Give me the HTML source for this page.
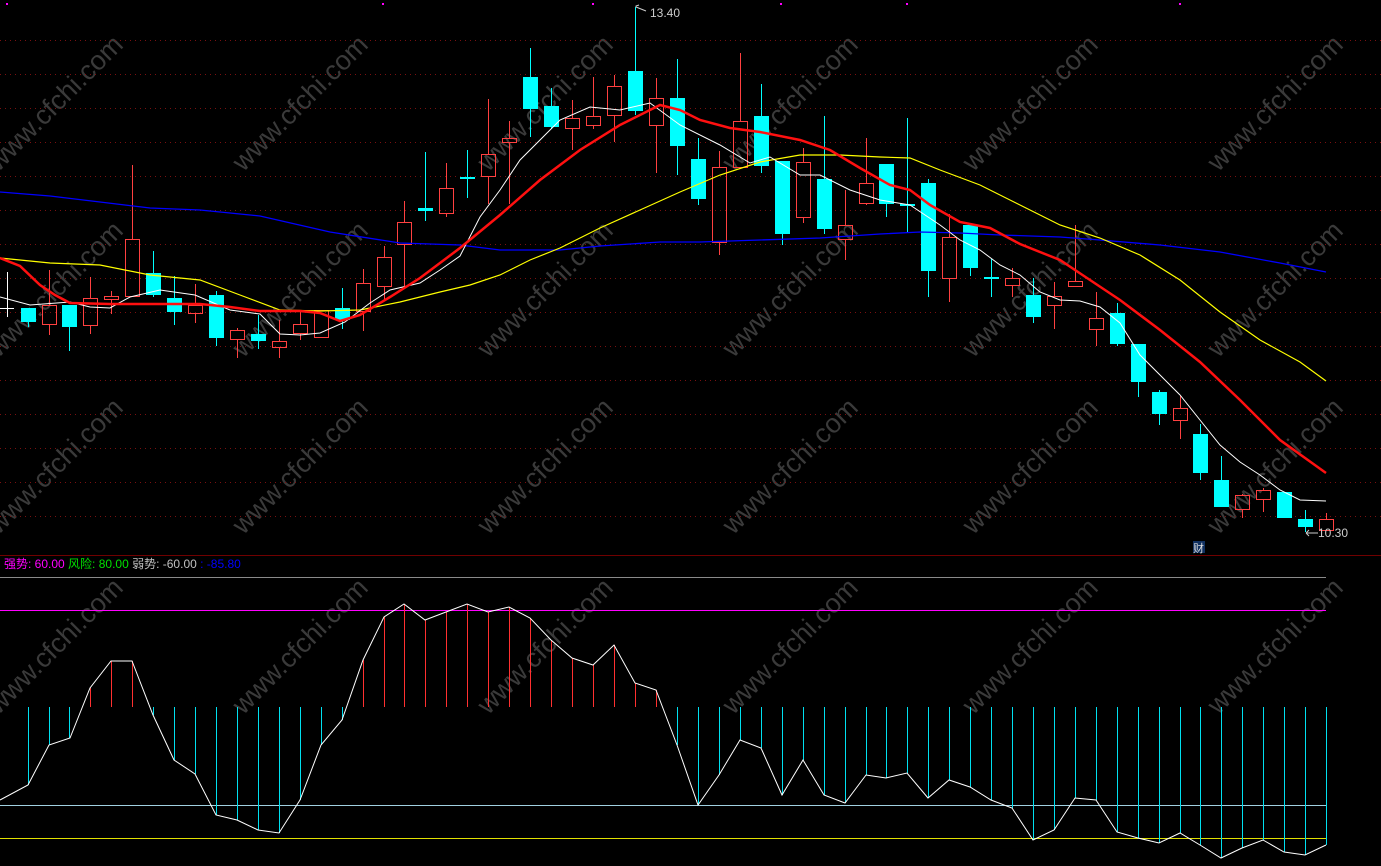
<!DOCTYPE html>
<html><head><meta charset="utf-8"><style>
html,body{margin:0;padding:0;background:#000;overflow:hidden}
svg{display:block}
text{font-family:"Liberation Sans","Noto Sans CJK SC",sans-serif}
</style></head><body>
<svg id="s" width="1381" height="866" viewBox="0 0 1381 866" xmlns="http://www.w3.org/2000/svg">
<rect width="1381" height="866" fill="#000"/>
<g id="wm" fill="#3a3a3a" font-size="27"></g>
<g id="grid" stroke="#7a1010" stroke-width="1" stroke-dasharray="1,4"></g>
<g id="candles"></g>
<g id="ma" fill="none"></g>
<line x1="0" y1="555.5" x2="1381" y2="555.5" stroke="#700000"/>
<line x1="0" y1="577.5" x2="1326" y2="577.5" stroke="#8a8a8a"/>
<line x1="0" y1="610.5" x2="1326" y2="610.5" stroke="#ff00ff"/>
<line x1="0" y1="805.5" x2="1326" y2="805.5" stroke="#a0d0e0"/>
<line x1="0" y1="838.5" x2="1326" y2="838.5" stroke="#e0e000"/>
<g id="ind"></g>
<text x="4" y="568" font-size="12"><tspan fill="#ff00ff">强势: 60.00</tspan> <tspan fill="#00e000">风险: 80.00</tspan> <tspan fill="#c0c0c0">弱势: -60.00</tspan> <tspan fill="#0000ff">: -85.80</tspan></text>
<path d="M636 7 v-1 l3 -1 M636 7 l10 4" stroke="#ccc" fill="none"/>
<text x="650" y="17" font-size="12" fill="#ccc">13.40</text>
<path d="M1306 533 l3 -3 M1306 533 l3 3 M1306 533 h12" stroke="#ccc" fill="none"/>
<text x="1318" y="537" font-size="12" fill="#ccc">10.30</text>
<rect x="1193" y="541" width="12" height="12" fill="#103060"/>
<text x="1193" y="552" font-size="11" fill="#ddd">财</text>
</svg>
<script>
var NS="http://www.w3.org/2000/svg";
function el(p,t,a){var e=document.createElementNS(NS,t);for(var k in a)e.setAttribute(k,a[k]);p.appendChild(e);return e;}
var g=document.getElementById('grid');
for(var y=40.5;y<520;y+=34)el(g,'line',{x1:0,y1:y,x2:1381,y2:y});
var wm=document.getElementById('wm');
[55,300,545,790,1030,1275].forEach(function(cx){[112,298,475,655].forEach(function(cy){
 var t=el(wm,'text',{x:cx,y:cy,'text-anchor':'middle','transform':'rotate(-45 '+cx+' '+(cy-9)+')'});t.textContent='www.cfchi.com';});});
[7,383,593,781,907,1180].forEach(function(x){el(document.getElementById('s'),'rect',{x:x-1,y:3,width:2,height:2,fill:'#ff00ff'});});
// x, open,close,high,low, type: r=red hollow, c=cyan, w=white doji
var C=[
[7,308,308,272,317,'w'],[28,308,322,308,327,'c'],[49,305,324,270,335,'r'],[69,305,327,305,351,'c'],
[90,298,325,277,334,'r'],[111,296,299,291,314,'r'],[132,239,296,165,296,'r'],[153,273,295,251,297,'c'],
[174,298,312,276,325,'c'],[195,305,313,284,323,'r'],[216,295,338,291,346,'c'],[237,330,339,328,358,'r'],
[258,334,341,315,349,'c'],[279,341,347,320,358,'r'],[300,324,333,310,340,'r'],[321,310,337,310,337,'r'],
[342,308,320,288,329,'c'],[363,283,311,269,331,'r'],[384,257,286,246,300,'r'],[404,222,244,201,288,'r'],
[425,208,211,152,221,'c'],[446,188,213,163,217,'r'],[467,177,179,150,198,'c'],[488,154,176,99,204,'r'],
[509,138,142,121,204,'r'],[530,77,109,48,137,'c'],[551,106,127,88,129,'c'],[572,118,128,100,150,'r'],
[593,116,125,77,129,'r'],[614,86,115,75,142,'r'],[635,71,111,7,115,'c'],[656,98,125,78,173,'r'],
[677,98,146,59,175,'c'],[698,159,199,138,205,'c'],[719,167,242,151,255,'r'],[740,121,167,53,167,'r'],
[761,116,166,84,173,'c'],[782,161,234,161,245,'c'],[803,162,217,148,223,'r'],[824,179,229,116,234,'c'],
[845,225,239,190,260,'r'],[866,183,203,138,205,'r'],[886,164,204,164,217,'c'],[907,204,206,118,232,'c'],
[928,183,271,179,297,'c'],[949,237,278,214,302,'r'],[970,225,268,225,276,'c'],[991,277,279,259,297,'c'],
[1012,278,285,268,297,'r'],[1033,295,317,278,323,'c'],[1054,296,305,282,329,'r'],[1075,281,286,225,286,'r'],
[1096,318,329,292,346,'r'],[1117,313,344,303,346,'c'],[1138,344,382,344,397,'c'],[1159,392,414,390,425,'c'],
[1180,408,420,396,439,'r'],[1200,434,473,424,480,'c'],[1221,480,507,456,507,'c'],[1242,495,509,494,518,'r'],
[1263,490,499,488,512,'r'],[1284,492,518,492,518,'c'],[1305,519,527,510,532,'c'],[1326,519,530,513,530,'r']];
var cg=document.getElementById('candles');
C.forEach(function(c){var x=c[0],t=c[1],b=c[2],h=c[3],l=c[4],k=c[5];
 if(k=='w'){el(cg,'line',{x1:x+.5,y1:h,x2:x+.5,y2:l,stroke:'#fff'});el(cg,'line',{x1:x-7,y1:t+.5,x2:x+7,y2:t+.5,stroke:'#fff'});return;}
 if(k=='c'){el(cg,'line',{x1:x+.5,y1:h,x2:x+.5,y2:l,stroke:'#00ffff'});el(cg,'rect',{x:x-7,y:t,width:15,height:Math.max(2,b-t),fill:'#00ffff'});}
 else{el(cg,'line',{x1:x+.5,y1:h,x2:x+.5,y2:t,stroke:'#ff4040'});el(cg,'line',{x1:x+.5,y1:b,x2:x+.5,y2:l,stroke:'#ff4040'});
  el(cg,'rect',{x:x-6.5,y:t+.5,width:14,height:Math.max(2,b-t),fill:'none',stroke:'#ff4040'});}
});
function pl(pts,col,w){el(document.getElementById('ma'),'polyline',{points:pts,stroke:col,'stroke-width':w,fill:'none'});}
pl("0,192 50,196 100,202 150,208 200,210 260,216 330,232 400,243 460,245 500,250 560,250 600,246 660,242 700,242 760,240 820,238 880,234 920,232 960,233 1000,235 1060,237 1100,240 1160,245 1220,252 1280,263 1326,272",'#0000ff',1.3);
pl("0,258 50,263 100,265 150,275 200,280 240,295 280,310 320,311 360,310 400,302 440,292 470,285 500,275 530,260 560,248 600,228 640,210 680,192 720,175 760,162 800,155 840,155 880,157 910,158 940,170 980,185 1020,205 1060,225 1100,238 1140,255 1180,280 1220,312 1260,340 1300,362 1326,381",'#ffff00',1.2);
pl("0,297 30,305 70,302 90,307 110,308 130,297 160,290 195,295 230,310 260,314 280,334 300,335 320,333 345,322 370,303 390,290 420,283 440,270 460,256 480,217 500,190 520,160 540,140 560,120 590,107 620,110 650,103 680,125 720,145 750,163 770,157 800,175 820,175 850,190 880,200 910,205 940,225 960,240 980,250 1000,265 1020,275 1040,292 1060,300 1080,301 1100,307 1120,323 1140,355 1160,375 1180,395 1200,420 1220,445 1240,462 1260,475 1280,490 1300,500 1326,501",'#ffffff',1);
pl("0,258 20,266 40,285 55,295 70,303 110,304 200,304 230,307 260,311 300,311 320,313 340,321 360,315 390,297 420,278 460,248 500,215 540,180 580,150 620,125 660,105 680,110 700,120 730,128 760,132 800,140 830,150 860,168 890,185 910,190 930,205 960,222 990,228 1020,244 1060,260 1090,280 1120,300 1160,330 1200,362 1240,400 1280,440 1326,473",'#ff1010',2.5);
var I=[[0,800],[28,785],[49,745],[70,738],[90,688],[111,661],[132,661],[153,715],[174,760],[195,774],[216,815],[237,820],[258,830],[279,833],[300,800],[321,745],[342,720],[363,660],[384,617],[404,604],[425,620],[446,612],[467,604],[488,612],[509,607],[530,618],[551,640],[572,658],[593,665],[614,645],[635,683],[656,690],[677,745],[698,805],[719,775],[740,740],[761,748],[782,795],[803,760],[824,795],[845,803],[866,775],[886,778],[907,773],[928,798],[949,780],[970,787],[991,800],[1012,808],[1033,840],[1054,830],[1075,798],[1096,800],[1117,832],[1138,838],[1159,843],[1180,833],[1200,845],[1221,858],[1242,848],[1263,840],[1284,852],[1305,855],[1326,845]];
var ig=document.getElementById('ind');
I.forEach(function(p,i){if(i==0)return;var x=C[i][0]+.5;el(ig,'line',{x1:x,y1:707,x2:x,y2:p[1],stroke:p[1]<707?'#ff3030':'#00e0f0'});});
el(ig,'polyline',{points:I.map(function(p){return p.join(',')}).join(' '),stroke:'#fff',fill:'none','stroke-width':1});
</script>
</body></html>
